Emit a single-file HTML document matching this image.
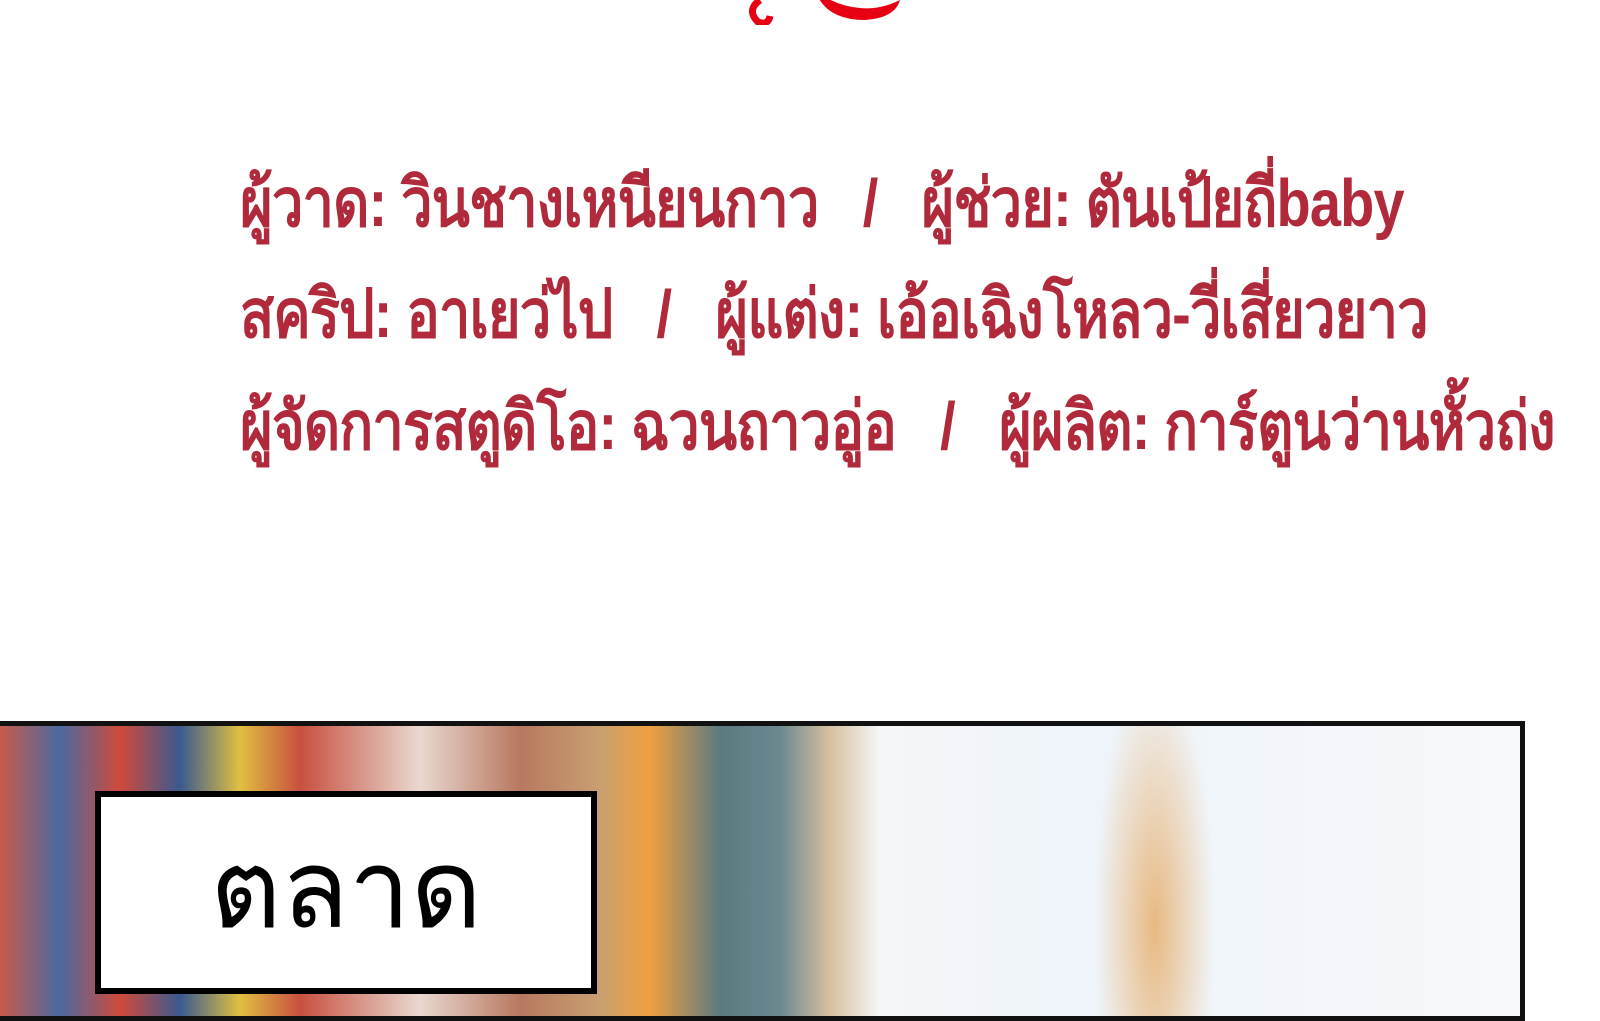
<!DOCTYPE html>
<html><head><meta charset="utf-8"><style>
html,body{margin:0;padding:0;width:1600px;height:1000px;overflow:hidden;background:#fff;font-family:"Liberation Sans","DejaVu Sans",sans-serif}
.t{position:absolute;left:240px;color:#b02a3c;font-size:67px;font-weight:bold;white-space:nowrap;letter-spacing:-1px;line-height:1;transform-origin:0 0}
.frame{position:absolute;left:0;top:721px;width:1525px;height:300px;border:5px solid #111;border-left:none;box-sizing:border-box;overflow:hidden;
background:
radial-gradient(ellipse 60px 260px at 1155px 200px,rgba(230,170,100,.8),transparent),
linear-gradient(90deg,#c85a4a 0,#4a6aa0 60px,#d04a3a 120px,#3a5a90 180px,#e0c040 240px,#c85040 300px,#e9d8d0 420px,#b87860 520px,#c8a070 600px,#f0a040 650px,#5a7a80 720px,#6a8890 780px,#d8c0a0 830px,#f4f6f8 880px,#eef4fa 1100px,#f7f9fb 1500px)}
.box{position:absolute;left:95px;top:791px;width:502px;height:203px;border:6px solid #000;background:#fff;box-sizing:border-box;font-size:110px;text-align:center;line-height:185px;color:#000}
.logo{position:absolute;left:740px;top:-20px;width:180px;height:45px}
</style></head><body>
<svg class="logo" viewBox="0 0 180 45"><path d="M20 20 q-14 10 -2 22 q10 4 12 -6" fill="none" stroke="#e60012" stroke-width="7"/><path d="M75 10 q10 30 50 30 q30 -2 35 -20 q-20 10 -40 8 q-25 -2 -45 -18z" fill="#e60012"/></svg>
<div class="t" style="top:170px;transform:scaleX(.835)">ผู้วาด: วินชางเหนียนกาว &nbsp; / &nbsp; ผู้ช่วย: ตันเป้ยถี่baby</div>
<div class="t" style="top:281px;transform:scaleX(.835)">สคริป: อาเยว่ไป &nbsp; / &nbsp; ผู้แต่ง: เอ้อเฉิงโหลว-วี่เสี่ยวยาว</div>
<div class="t" style="top:393px;transform:scaleX(.835)">ผู้จัดการสตูดิโอ: ฉวนถาวอู่อ &nbsp; / &nbsp; ผู้ผลิต: การ์ตูนว่านหั้วถ่ง</div>
<div class="frame"></div>
<div class="box">ตลาด</div>
</body></html>
